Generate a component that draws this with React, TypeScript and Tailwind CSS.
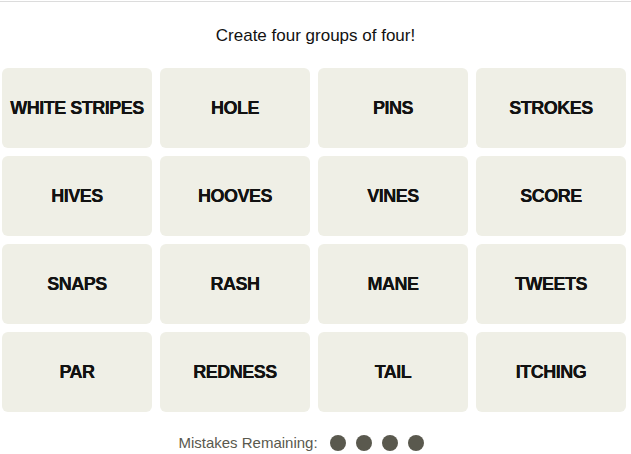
const WORDS = [
  "WHITE STRIPES",
  "HOLE",
  "PINS",
  "STROKES",
  "HIVES",
  "HOOVES",
  "VINES",
  "SCORE",
  "SNAPS",
  "RASH",
  "MANE",
  "TWEETS",
  "PAR",
  "REDNESS",
  "TAIL",
  "ITCHING",
];

export default function App() {
  return (
    <div className="min-h-screen bg-white pt-px font-['Liberation_Sans',Arial,sans-serif] text-[#121212]">
      <div className="border-t border-[#dcdcdc]" />

      <p className="mt-[22px] text-center text-[17px] leading-6">
        Create four groups of four!
      </p>

      {/* Board */}
      <div className="mt-[20px] ml-[2px] grid w-[624px] grid-cols-4 gap-2">
        {WORDS.map((w) => (
          <button
            key={w}
            className="flex h-[80px] items-center justify-center rounded-md bg-[#efefe6] text-[18px] font-bold tracking-[-0.5px] text-[#121212] [text-shadow:0_0_0.4px_#121212]"
          >
            {w}
          </button>
        ))}
      </div>

      {/* Mistakes */}
      <div className="mt-[19px] flex items-center justify-center pr-[29px]">
        <span className="text-[15px] leading-6 text-[#5a594e]">Mistakes Remaining:</span>
        <div className="ml-3 flex gap-[10px]">
          {[0, 1, 2, 3].map((i) => (
            <span key={i} className="h-4 w-4 rounded-full bg-[#5a594e]" />
          ))}
        </div>
      </div>
    </div>
  );
}
